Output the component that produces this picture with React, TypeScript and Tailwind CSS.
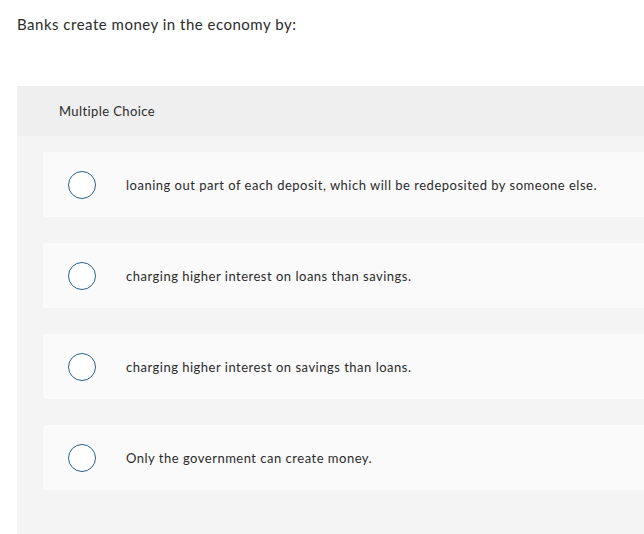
const options = [
  "loaning out part of each deposit, which will be redeposited by someone else.",
  "charging higher interest on loans than savings.",
  "charging higher interest on savings than loans.",
  "Only the government can create money.",
];

function Radio() {
  return (
    <span className="block w-[28px] h-[28px] shrink-0 rounded-full border-[1.5px] border-[#2a5f8f] bg-white" />
  );
}

export default function App() {
  return (
    <div
      className="w-[644px] h-[534px] overflow-hidden bg-white text-[#333]"
      style={{ fontFamily: "Lato, 'Open Sans', sans-serif" }}
    >
      <h1 className="pl-[17px] pt-[14px] h-[86px] text-[15px] leading-[20px] tracking-[0.5px] text-[#2b2b2b]">
        Banks create money in the economy by:
      </h1>
      <div className="ml-[17px] w-[660px] bg-[#f4f4f4] h-[448px]">
        <div className="h-[50px] bg-[#efefef] flex items-center pl-[42px] pt-[2px] text-[13px] tracking-[0.4px] text-[#2b2b2b]">
          Multiple Choice
        </div>
        <div className="pl-[26px] pt-[16px] flex flex-col gap-[26px]">
          {options.map((o) => (
            <div
              key={o}
              className="h-[65px] bg-[#fafafa] rounded-[3px] flex items-center pl-[25px]"
            >
              <Radio />
              <span className="ml-[30px] pt-[2px] text-[13px] tracking-[0.5px] text-[#2b2b2b]">
                {o}
              </span>
            </div>
          ))}
        </div>
      </div>
    </div>
  );
}
